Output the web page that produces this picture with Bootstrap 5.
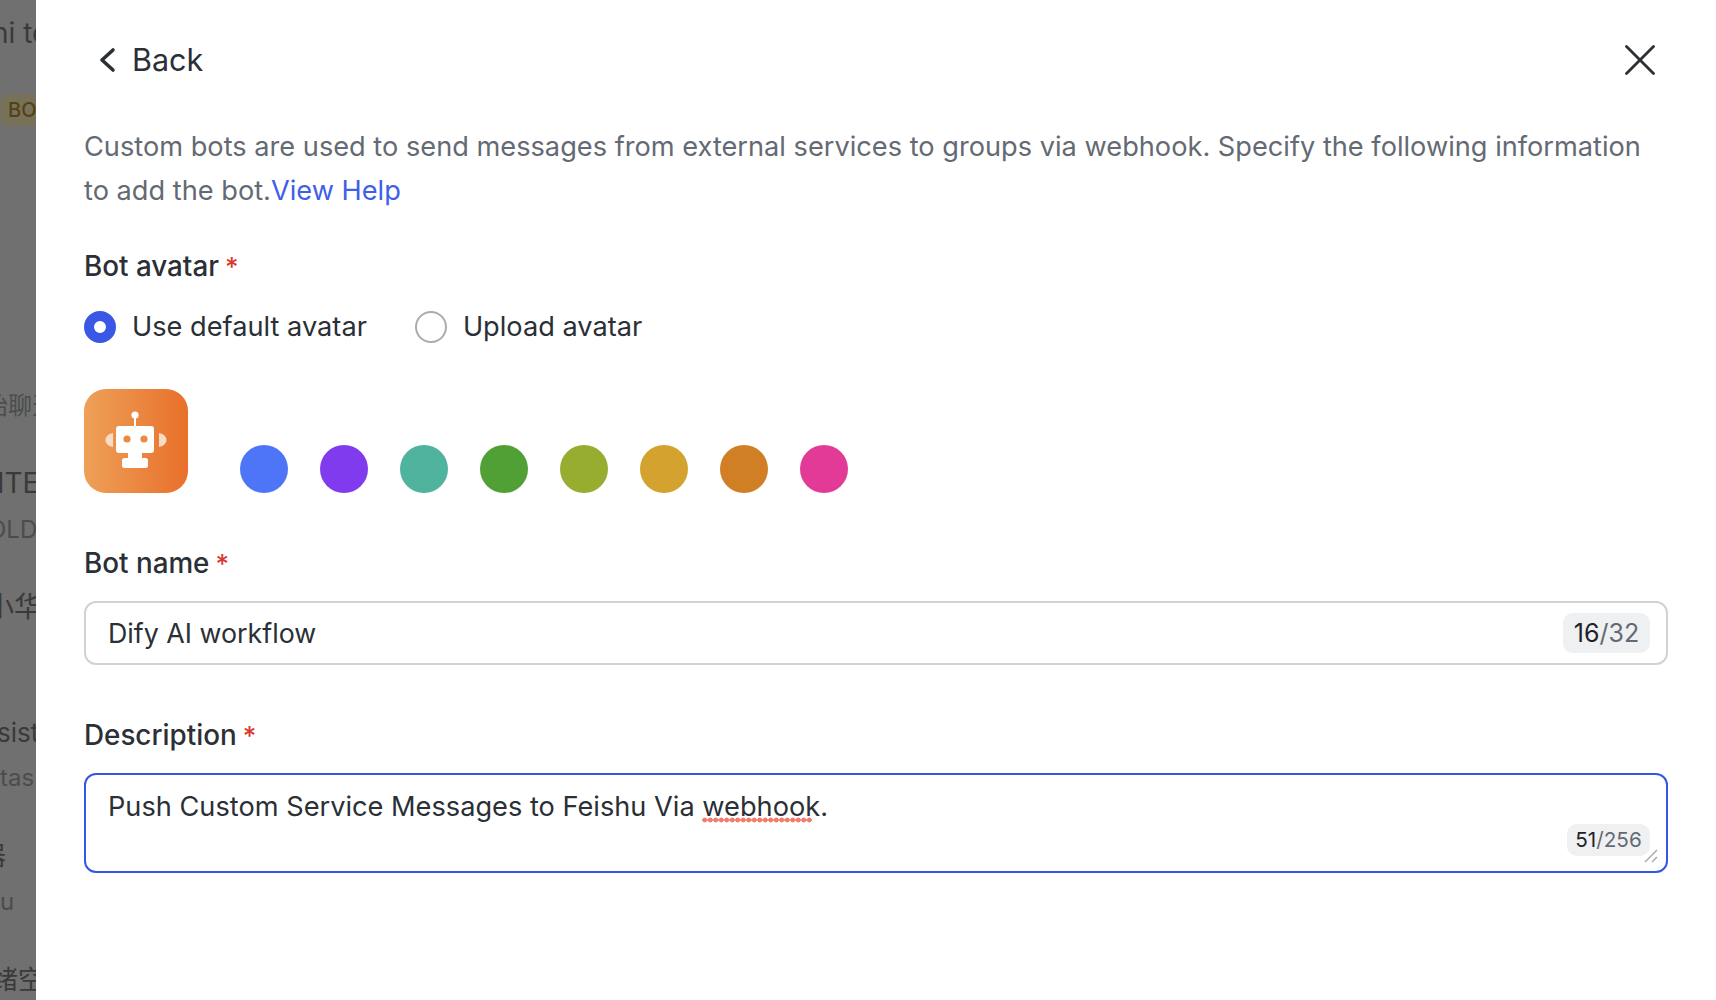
<!DOCTYPE html>
<html lang="en">
<head>
    <meta charset="UTF-8">
    <meta name="viewport" content="width=device-width, initial-scale=1.0">
    <title>Add custom bot</title>
    <link href="https://cdn.jsdelivr.net/npm/bootstrap@5.3.0/dist/css/bootstrap.min.css" rel="stylesheet">
    <style>
        html, body {
            height: 1000px;
            overflow: hidden;
        }
        body {
            font-family: Inter, "Noto Sans CJK SC", sans-serif;
            color: #2b2f36;
            background-color: #fff;
        }
        .back-strip {
            width: 36px;
            height: 1000px;
            background-color: #707070;
            overflow: hidden;
            color: #3a3a3a;
            font-size: 26px;
            white-space: nowrap;
        }
        .strip-line {
            height: 40px;
            line-height: 40px;
        }
        .strip-line.dim {
            color: #4c4c4c;
            font-size: 24px;
        }
        .strip-a { margin: 13px 0 0 -8px; font-size: 28px; }
        .strip-b { margin: 35px 0 0 0; }
        .strip-c { margin: 258px 0 0 -16px; }
        .strip-d { margin: 37px 0 0 -3px; font-size: 28px; }
        .strip-e { margin: 7px 0 0 -12px; }
        .strip-f { margin: 37px 0 0 -14px; font-size: 28px; }
        .strip-g { margin: 86px 0 0 -3px; }
        .strip-h { margin: 5px 0 0 0; }
        .strip-i { margin: 38px 0 0 -20px; }
        .strip-j { margin: 6px 0 0 0; }
        .strip-k { margin: 38px 0 0 -8px; }
        .strip-tag {
            display: inline-block;
            height: 32px;
            line-height: 32px;
            padding: 0 8px;
            border-radius: 8px;
            background-color: #787159;
            color: #534216;
            font-size: 20px;
            font-weight: 500;
        }
        .panel-body {
            padding: 0 48px;
        }
        .panel-head {
            height: 120px;
            margin-bottom: 5px;
            padding-right: 13px;
        }
        .back-chevron {
            margin-left: 14px;
        }
        .back-label {
            font-size: 30.5px;
            line-height: 40px;
        }
        .panel-text {
            font-size: 27.2px;
            line-height: 44px;
            color: #646a73;
        }
        .panel-text a {
            color: #3f5fe8;
            text-decoration: none;
        }
        .field-label {
            font-size: 27.8px;
            font-weight: 500;
            line-height: 40px;
        }
        .label-avatar { margin-top: 33px; }
        .label-name { margin-top: 50px; }
        .label-desc { margin-top: 50px; }
        .req {
            color: #d83931;
            margin-left: 6px;
            font-size: 26px;
        }
        .pick-row {
            margin-top: 20px;
        }
        .pick-radio {
            width: 32px;
            height: 32px;
            border-radius: 50%;
            border: 2px solid #a8acb2;
            margin-right: 16px;
        }
        .pick-radio.on {
            border: 10px solid #3a58e6;
        }
        .pick-text {
            font-size: 27.2px;
            line-height: 40px;
        }
        .pick-text + .pick-radio {
            margin-left: 48px;
        }
        .avatar-row {
            margin-top: 42px;
        }
        .avatar-box {
            width: 104px;
            height: 104px;
            border-radius: 22px;
            background: linear-gradient(90deg, #eea059, #e8702a);
            margin-right: 52px;
        }
        .swatch {
            width: 48px;
            height: 48px;
            border-radius: 50%;
        }
        .swatch:nth-child(1) { background-color: #4e75f8; }
        .swatch:nth-child(2) { background-color: #7f3bed; }
        .swatch:nth-child(3) { background-color: #4fb39e; }
        .swatch:nth-child(4) { background-color: #50a035; }
        .swatch:nth-child(5) { background-color: #97ad30; }
        .swatch:nth-child(6) { background-color: #d4a22e; }
        .swatch:nth-child(7) { background-color: #d07f25; }
        .swatch:nth-child(8) { background-color: #e23a96; }
        .swatch-list {
            gap: 32px;
        }
        .field-box {
            margin-top: 17px;
            border: 2px solid #d0d3d6;
            border-radius: 12px;
            padding: 0 16px 0 22px;
            font-size: 27.2px;
        }
        .name-box {
            height: 64px;
            font-size: 26.8px;
        }
        .desc-box {
            height: 100px;
            border-color: #3356e8;
            padding-top: 12px;
            line-height: 40px;
        }
        .counter {
            background-color: #eff0f1;
            border-radius: 10px;
            color: #646a73;
        }
        .counter b {
            font-weight: 400;
            color: #1f2329;
        }
        .count-name {
            width: 87px;
            height: 40px;
            line-height: 40px;
            font-size: 25px;
        }
        .count-desc {
            position: absolute;
            right: 16px;
            bottom: 15px;
            width: 83px;
            height: 32px;
            line-height: 32px;
            font-size: 20.7px;
        }
        .spell {
            position: relative;
        }
        .spell::after {
            content: "";
            position: absolute;
            left: 0;
            bottom: 0;
            width: 110px;
            height: 6px;
            background: radial-gradient(circle at center, #f47c6c 2.3px, transparent 2.7px) left center / 5.5px 6px repeat-x;
        }
        .grip {
            position: absolute;
            right: 8px;
            bottom: 8px;
        }
    </style>
</head>
<body>
    <div class="d-flex">
        <!-- dimmed page behind the drawer -->
        <div class="back-strip flex-shrink-0">
            <div class="strip-line strip-a">hi to</div>
            <div class="strip-line strip-b"><span class="strip-tag">BOT</span></div>
            <div class="strip-line dim strip-c">始聊天</div>
            <div class="strip-line strip-d">ITEM</div>
            <div class="strip-line dim strip-e">OLD</div>
            <div class="strip-line strip-f">小华</div>
            <div class="strip-line strip-g">sist</div>
            <div class="strip-line dim strip-h">tas</div>
            <div class="strip-line strip-i">器</div>
            <div class="strip-line dim strip-j">u</div>
            <div class="strip-line strip-k">绪空</div>
        </div>

        <div class="panel-body flex-grow-1">
            <div class="panel-head d-flex align-items-center justify-content-between">
                <div class="d-flex align-items-center gap-3">
                    <svg class="back-chevron" width="18" height="28" viewBox="0 0 18 28" fill="none" stroke="#2b2f36" stroke-width="3.6" stroke-linecap="round" stroke-linejoin="round"><path d="M15 4 L4 14 L15 24"/></svg>
                    <span class="back-label">Back</span>
                </div>
                <svg width="30" height="30" viewBox="0 0 30 30" fill="none" stroke="#2b2f36" stroke-width="2.8" stroke-linecap="round"><path d="M1.5 1.5 L28.5 28.5 M28.5 1.5 L1.5 28.5"/></svg>
            </div>

            <p class="panel-text mb-0">Custom bots are used to send messages from external services to groups via webhook. Specify the following information to add the bot.<a href="#">View Help</a></p>

            <div class="field-label label-avatar">Bot avatar<span class="req">*</span></div>
            <div class="pick-row d-flex align-items-center">
                <span class="pick-radio on"></span>
                <span class="pick-text">Use default avatar</span>
                <span class="pick-radio"></span>
                <span class="pick-text">Upload avatar</span>
            </div>

            <div class="avatar-row d-flex align-items-end">
                <div class="avatar-box">
                    <svg width="104" height="104" viewBox="0 0 104 104">
                        <path d="M29 44 C19 46 19 56 29 58 Z M75 44 C85 46 85 56 75 58 Z" fill="#f8dcc6"/>
                        <circle cx="51" cy="26" r="3.6" fill="#fff"/>
                        <rect x="50" y="28" width="2" height="10" fill="#fff"/>
                        <rect x="32" y="37" width="38" height="27" rx="3" fill="#fff"/>
                        <rect x="44" y="63" width="14" height="7" fill="#fff"/>
                        <rect x="38" y="69" width="26" height="10" rx="2.5" fill="#fff"/>
                        <circle cx="43" cy="50" r="3.6" fill="#ec8a42"/>
                        <circle cx="60" cy="50" r="3.6" fill="#ec8a42"/>
                    </svg>
                </div>
                <div class="swatch-list d-flex">
                    <span class="swatch"></span>
                    <span class="swatch"></span>
                    <span class="swatch"></span>
                    <span class="swatch"></span>
                    <span class="swatch"></span>
                    <span class="swatch"></span>
                    <span class="swatch"></span>
                    <span class="swatch"></span>
                </div>
            </div>

            <div class="field-label label-name">Bot name<span class="req">*</span></div>
            <div class="field-box name-box d-flex align-items-center justify-content-between">
                <span>Dify AI workflow</span>
                <span class="counter count-name text-center"><b>16</b>/32</span>
            </div>

            <div class="field-label label-desc">Description<span class="req">*</span></div>
            <div class="field-box desc-box position-relative">
                Push Custom Service Messages to Feishu Via <span class="spell">webhook</span>.
                <span class="counter count-desc text-center"><b>51</b>/256</span>
                <svg class="grip" width="14" height="14" viewBox="0 0 14 14" stroke="#a8acb2" stroke-width="1.5" fill="none"><path d="M1 13 L13 1 M8 13 L13 8"/></svg>
            </div>
        </div>
    </div>

    <script src="https://cdn.jsdelivr.net/npm/bootstrap@5.3.0/dist/js/bootstrap.bundle.min.js"></script>
</body>
</html>
